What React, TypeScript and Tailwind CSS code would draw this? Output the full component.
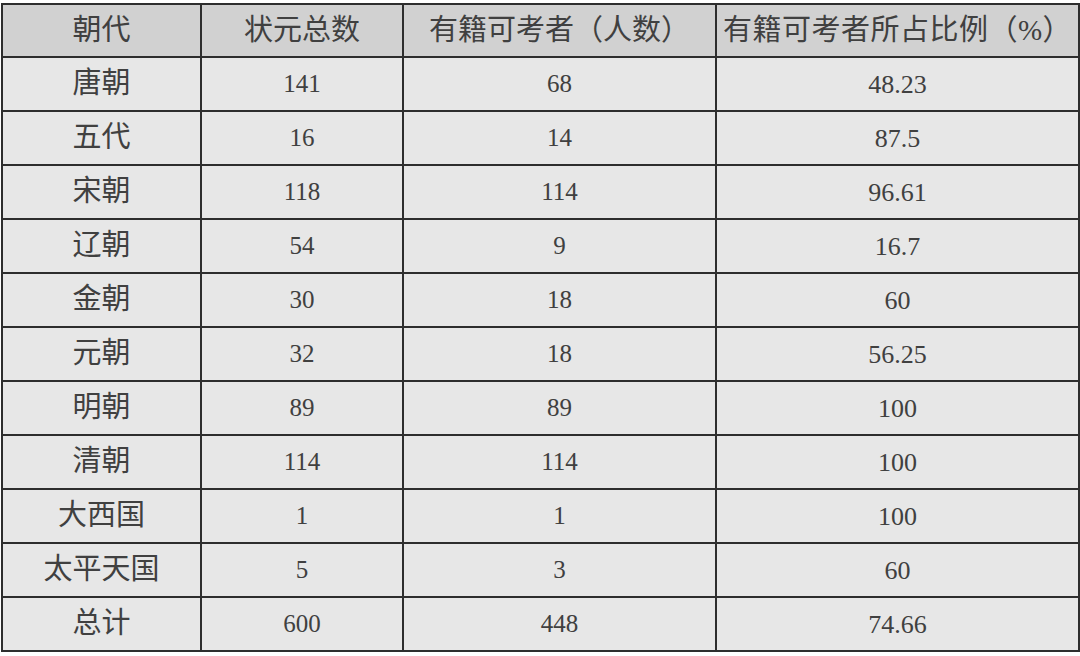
import React from 'react';

const rows = [
  ["唐朝", "141", "68", "48.23"],
  ["五代", "16", "14", "87.5"],
  ["宋朝", "118", "114", "96.61"],
  ["辽朝", "54", "9", "16.7"],
  ["金朝", "30", "18", "60"],
  ["元朝", "32", "18", "56.25"],
  ["明朝", "89", "89", "100"],
  ["清朝", "114", "114", "100"],
  ["大西国", "1", "1", "100"],
  ["太平天国", "5", "3", "60"],
  ["总计", "600", "448", "74.66"],
];

const font = "font-['Liberation_Serif','Noto_Sans_CJK_SC',serif]";

export default function App() {
  return (
    <div className="w-[1080px] h-[656px] bg-white pt-[3px] pl-px">
      <table className={`border-collapse text-[#404040] ${font}`}>
        <colgroup>
          <col className="w-[199px]" />
          <col className="w-[202px]" />
          <col className="w-[313px]" />
          <col className="w-[363px]" />
        </colgroup>
        <thead>
          <tr className="h-[53px] bg-[#d1d1d1] text-[29px]">
            <th className="border-2 border-[#2e2e2e] font-normal">朝代</th>
            <th className="border-2 border-[#2e2e2e] font-normal">状元总数</th>
            <th className="border-2 border-[#2e2e2e] font-normal whitespace-nowrap">有籍可考者（人数）</th>
            <th className="border-2 border-[#2e2e2e] font-normal whitespace-nowrap tracking-[0.5px]">有籍可考者所占比例（%）</th>
          </tr>
        </thead>
        <tbody>
          {rows.map((r) => (
            <tr key={r[0]} className="h-[54px] bg-[#e7e7e7]">
              <td className="border-2 border-[#2e2e2e] text-center text-[29px]">{r[0]}</td>
              <td className="border-2 border-[#2e2e2e] text-center text-[25px]">{r[1]}</td>
              <td className="border-2 border-[#2e2e2e] text-center text-[25px]">{r[2]}</td>
              <td className="border-2 border-[#2e2e2e] text-center text-[26px]">{r[3]}</td>
            </tr>
          ))}
        </tbody>
      </table>
    </div>
  );
}
